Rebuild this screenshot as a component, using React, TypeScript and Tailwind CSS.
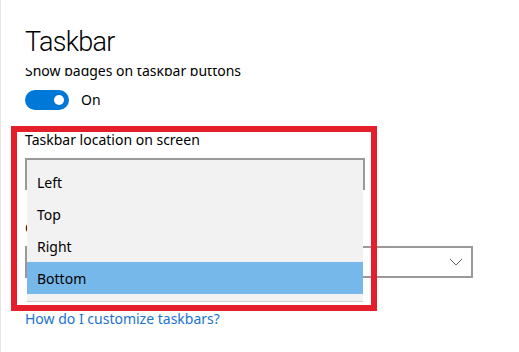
import React from "react";

export default function App() {
  return (
    <div className="relative w-[519px] h-[352px] overflow-hidden bg-white border-l border-[#e6e6e6] font-['Noto_Sans',sans-serif] text-black">
      <div className="h-[68px] pl-[24px] pt-[24px]">
        <h1 className="text-[27px] leading-[36px] font-light tracking-[-0.7px] font-['Roboto',sans-serif]">Taskbar</h1>
      </div>
      <div className="h-[284px] overflow-hidden pl-[24px]">
        <div className="-mt-[7px] flex flex-col">
          <div className="text-[14px] leading-[20px] h-[20px] whitespace-nowrap">Show badges on taskbar buttons</div>
          <div className="mt-[9px] flex items-center gap-[12px] h-[20px]">
            <div className="relative w-[44px] h-[20px] rounded-full bg-[#0078d7]">
              <div className="absolute right-[5px] top-[5px] w-[10px] h-[10px] rounded-full bg-white" />
            </div>
            <span className="text-[14px] leading-[20px]">On</span>
          </div>
          <div className="mt-[20px] text-[14px] leading-[20px] h-[20px]">Taskbar location on screen</div>
          <div className="mt-[8px] w-[340px] h-[32px] border-2 border-[#999999]" />
          <div className="mt-[28px] text-[14px] leading-[20px] h-[20px]">Combine taskbar buttons</div>
          <div className="mt-[8px] w-[448px] h-[32px] border-2 border-[#999999] flex items-center justify-end pr-[8px]">
            <svg width="14" height="8" viewBox="0 0 14 8" fill="none">
              <path d="M1 1 L7 7 L13 1" stroke="#666666" strokeWidth="1" />
            </svg>
          </div>
          <div className="mt-[31px] text-[14px] leading-[20px] text-[#1a73d0]">How do I customize taskbars?</div>
        </div>
      </div>

      <div className="absolute left-[26px] top-[160px] w-[336px] h-[142px] bg-[#f2f2f2] border-b border-[#cccccc] pt-[6px]">
        {["Left", "Top", "Right"].map((t) => (
          <div key={t} className="h-[32px] pl-[10px] flex items-center text-[14px]">{t}</div>
        ))}
        <div className="h-[32px] pl-[10px] flex items-center text-[14px] bg-[#77b8eb]">Bottom</div>
      </div>

      <div className="absolute left-[10px] top-[126px] w-[366px] h-[185px] border-[6px] border-[#e41e2a]" />
    </div>
  );
}
